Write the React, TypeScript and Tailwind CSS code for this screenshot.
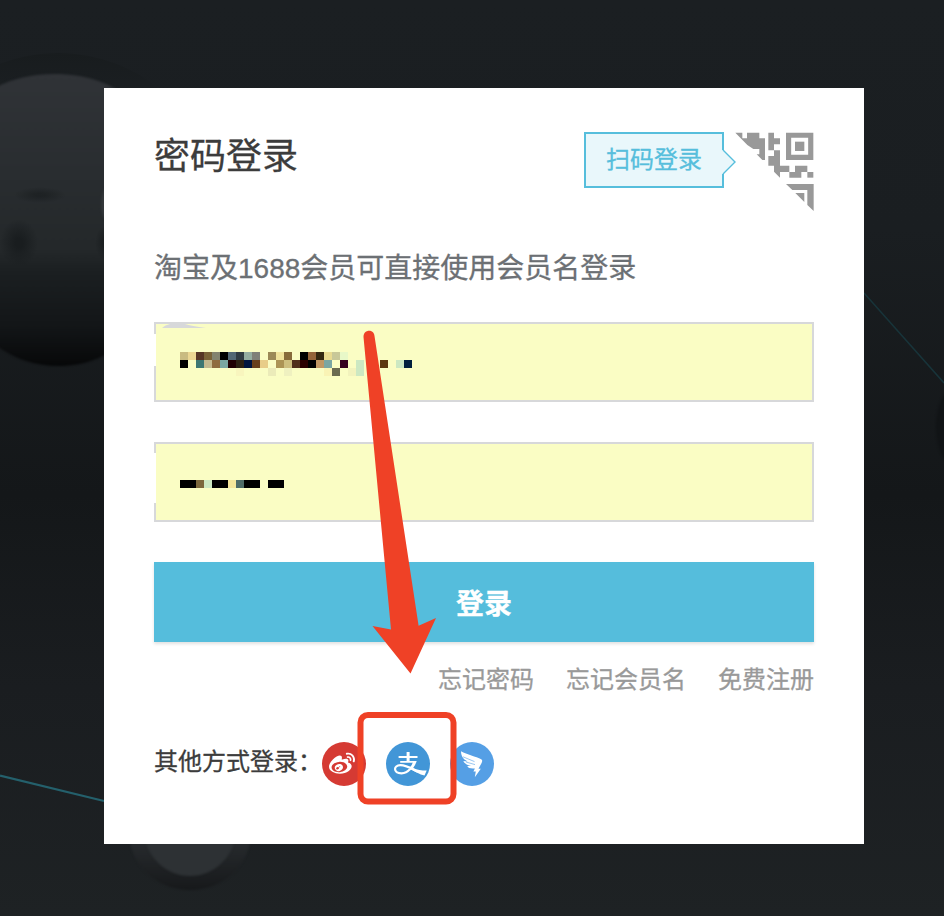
import React from "react";
import { FaWeibo } from "react-icons/fa";

const ACCOUNT_ROWS: string[][] = [
  ["#c9bb81", "#ecd793", "#563626", "#796338", "#83846f", "#000", "#526774", "#303b42", "#94ada0", "#7f8078", "", "#9b8957", "#f0e39b", "#876b3a", "", "#000", "#94643a", "#332811", "#e8db91", "#c8c898", "#e8f8c8"],
  ["#000", "", "#3d7773", "#c4b98f", "#8e6b40", "#7aa7a2", "#200003", "#2c2113", "#001540", "#67401d", "#e8cd89", "", "#ac9455", "#cdbf7e", "#51301c", "#2b0000", "#000", "#c09763", "#7aa6a2", "", "#35001f", "", "#cce8c2", "", "", "#5c3711", "", "#cce8c2", "#001f3d"],
  ["", "", "", "", "", "", "", "#f8f5be", "", "", "", "#ebebb9", "", "#eff1c0", "", "", "", "", "#f9f3b5", "#6a6b50", "", "#f2f3bd", "#cce8c2"],
];

const PASSWORD_ROWS: string[][] = [
  ["#000", "#000", "#7b673c", "#cce8c2", "#000", "#000", "#f5e79b", "#4e6b67", "#000", "#000", "", "#000", "#000"],
];

function Mosaic({ rows }: { rows: string[][] }) {
  return (
    <div className="flex flex-col">
      {rows.map((row, r) => (
        <div key={r} className="flex h-2">
          {row.map((color, c) => (
            <span key={c} className="h-2 w-2" style={{ backgroundColor: color || "transparent" }} />
          ))}
        </div>
      ))}
    </div>
  );
}

function Backdrop() {
  return (
    <svg className="absolute inset-0" width="944" height="916" viewBox="0 0 944 916" fill="none">
      <defs>
        <linearGradient id="base" x1="0" y1="0" x2="0" y2="1">
          <stop offset="0" stopColor="#1b1f22" />
          <stop offset="0.25" stopColor="#1a1e21" />
          <stop offset="0.54" stopColor="#141719" />
          <stop offset="0.75" stopColor="#1a1d20" />
          <stop offset="1" stopColor="#1e2224" />
        </linearGradient>
        <linearGradient id="head" x1="0" y1="74" x2="0" y2="366" gradientUnits="userSpaceOnUse">
          <stop offset="0" stopColor="#303337" />
          <stop offset="0.35" stopColor="#292d30" />
          <stop offset="0.6" stopColor="#24282a" />
          <stop offset="0.68" stopColor="#1b1f21" />
          <stop offset="0.86" stopColor="#131618" />
          <stop offset="1" stopColor="#070809" />
        </linearGradient>
        <linearGradient id="halo" x1="0" y1="52" x2="0" y2="200" gradientUnits="userSpaceOnUse">
          <stop offset="0" stopColor="#181c1e" />
          <stop offset="0.3" stopColor="#1b1f22" />
          <stop offset="1" stopColor="#191d1f" />
        </linearGradient>
        <linearGradient id="rim" x1="0" y1="830" x2="0" y2="890" gradientUnits="userSpaceOnUse">
          <stop offset="0" stopColor="#2b2f32" />
          <stop offset="1" stopColor="#17191b" />
        </linearGradient>
        <radialGradient id="eye">
          <stop offset="0.2" stopColor="#191d1f" />
          <stop offset="1" stopColor="#191d1f" stopOpacity="0" />
        </radialGradient>
        <filter id="edge" x="-10%" y="-10%" width="120%" height="120%" colorInterpolationFilters="sRGB">
          <feGaussianBlur stdDeviation="1.2" />
        </filter>
      </defs>
      <rect width="944" height="916" fill="url(#base)" />
      <ellipse cx="58" cy="190" rx="150" ry="137" fill="url(#halo)" />
      <path d="M-60 190C-60 105 0 74 54 74C118 74 170 112 170 200C170 310 125 366 58 366C0 366-60 320-60 190Z" fill="url(#head)" filter="url(#edge)" />
      <ellipse cx="40" cy="195" rx="26" ry="8" fill="url(#eye)" opacity="0.65" />
      <ellipse cx="19" cy="243" rx="19" ry="24" fill="url(#eye)" />
      <ellipse cx="107" cy="204" rx="6" ry="16" fill="#34383b" filter="url(#edge)" />
      <ellipse cx="107" cy="243" rx="12" ry="18" fill="url(#eye)" />
      <path d="M0 775.5L104 801" stroke="#24606c" strokeWidth="2.2" />
      <path d="M864 293L944 383" stroke="#18343a" strokeWidth="1.5" />
      <ellipse cx="190" cy="832" rx="61" ry="58" fill="url(#rim)" filter="url(#edge)" />
      <ellipse cx="190" cy="829" rx="46" ry="47" fill="#2d3134" filter="url(#edge)" />
      <ellipse cx="954" cy="427" rx="18" ry="38" fill="#111416" filter="url(#edge)" />
    </svg>
  );
}

function QrCorner() {
  return (
    <svg width="79" height="79" viewBox="15 21 237 237" fill="#999">
      <path d="M16 23H37V40H51V23H88V40H105V105H97L80 88H88V72H70L52 60Z" />
      <path d="M115 23H132V40H150V58H132V76H115Z" />
      <path d="M132 76H150V122H178V141H150V158L132 140V122H115V93H132Z" />
      <path d="M195 122H232V141H214V158H178V141H195Z" />
      <path d="M232 141H250V158H232Z" />
      <path fillRule="evenodd" d="M168 23H250V105H168ZM183.5 38.5V89.5H234.5V38.5Z" />
      <path d="M195 50H223V78H195Z" />
      <path d="M168 177H251V258L232 240V195H187Z" />
      <path d="M196 204H223V231Z" />
    </svg>
  );
}

function AlipayMark() {
  return (
    <svg width="44" height="44" viewBox="0 0 44 44" fill="none" stroke="#fff">
      <path d="M12.6 15H31.5M14.2 19.9H29.5" strokeWidth="1.8" />
      <path d="M22.1 10V19.8" strokeWidth="3" />
      <path d="M28.4 19.4C27.2 24 22.5 31.3 15.5 31.3C7.2 31.3 7 23.2 14.4 23.2C20.5 23.2 27 27.4 32 29.8" strokeWidth="2.2" />
      <path d="M27.4 19H30.7C30 21.5 28.5 24 27.2 25.9C31 27.7 35.5 28.4 40.7 28.6L38.5 33.6C33.5 32.3 29 29.8 24.4 27C26 24.5 27 22 27.4 19Z" fill="#fff" stroke="none" />
    </svg>
  );
}

function DingTalkMark() {
  return (
    <svg width="44" height="44" viewBox="0 0 44 44" fill="#fff">
      <path d="M11 9.2C17 12.7 26 14.4 31.2 17.2C32.7 18 32.3 19.5 31.6 21L28.5 26.8H30.8L24.8 35.2L25.8 29.6H23.4L24.9 26.4C20.5 26.8 18.5 26 17.2 24.3L21 23.6C17 23.2 14.5 21.6 13.3 18.9L17.5 19.4C13.5 17.2 11.1 14.6 11 9.2Z" />
      <path d="M13 14.8L24.5 19.6M16 20L25 22.6" stroke="#559fe5" strokeWidth="0.6" fill="none" />
    </svg>
  );
}

function Field({ rows, mark }: { rows: string[][]; mark?: boolean }) {
  return (
    <div className="relative flex h-20 items-center border-2 border-[#d7d8da] bg-[#fafdc4] pl-6">
      <div className={mark ? "mt-[4px]" : "mt-[4px]"}>
        <Mosaic rows={rows} />
      </div>
      <span className={mark ? "absolute -left-[2px] top-[10px] h-[32px] w-[2px] bg-white" : "absolute -left-[2px] top-[9px] h-[50px] w-[2px] bg-white"} />
      {mark && (
        <svg className="absolute left-[5px] top-0" width="46" height="4" viewBox="0 0 46 4">
          <path d="M1 4Q4 1.2 9 0H24Q30 1.8 45 4Z" fill="#d7d8da" />
        </svg>
      )}
    </div>
  );
}

export default function App() {
  return (
    <div className="relative h-[916px] w-[944px] overflow-hidden bg-[#1a1e21] font-['Liberation_Sans','Noto_Sans_CJK_SC',sans-serif]">
      <Backdrop />
      <main className="relative ml-[104px] mt-[88px] flex h-[756px] w-[760px] flex-col bg-white px-[50px] pt-[44px] [-webkit-text-stroke:0.3px]">
        <header className="flex h-[79px] items-start justify-between">
          <h1 className="text-[36px] leading-[50px] text-[#3c3c3c]">密码登录</h1>
          <div className="flex items-start">
            <div className="relative mr-[11px] flex h-14 w-[140px] items-center justify-center border-2 border-[#56bedc] bg-[#e9f7fb] text-[24px] leading-8 text-[#56bedc]">
              扫码登录
              <svg className="absolute -right-[14px] top-[15px]" width="14" height="26" viewBox="0 0 14 26">
                <path d="M0 1H1L13 13L1 25H0Z" fill="#e9f7fb" />
                <path d="M1 1L13 13L1 25" fill="none" stroke="#56bedc" strokeWidth="1.4" />
              </svg>
            </div>
            <QrCorner />
          </div>
        </header>
        <p className="mt-[38px] h-10 text-[28px] leading-10 text-[#6c7074]">淘宝及1688会员可直接使用会员名登录</p>
        <form className="mt-[33px] flex flex-col gap-10">
          <Field rows={ACCOUNT_ROWS} mark />
          <Field rows={PASSWORD_ROWS} />
          <button type="button" className="h-20 bg-[#55bddc] pt-[5px] text-[28px] font-bold leading-[75px] text-white shadow-[0_2px_3px_rgba(0,0,0,0.12)]">
            登录
          </button>
        </form>
        <nav className="mt-5 flex h-9 justify-end gap-8 whitespace-nowrap text-[24px] leading-9 text-[#999]">
          <span>忘记密码</span>
          <span>忘记会员名</span>
          <span>免费注册</span>
        </nav>
        <div className="mt-[44px] flex h-11 items-center">
          <span className="mb-1 w-[168px] whitespace-nowrap text-[24px] leading-9 text-[#3c3c3c]">其他方式登录：</span>
          <div className="flex gap-5">
            <span className="flex h-11 w-11 items-center justify-center rounded-full bg-[#d53a33] pr-[4px] text-white">
              <FaWeibo size={26} />
            </span>
            <span className="h-11 w-11 rounded-full bg-[#4296d7]">
              <AlipayMark />
            </span>
            <span className="h-11 w-11 rounded-full bg-[#559fe5]">
              <DingTalkMark />
            </span>
          </div>
        </div>
      </main>
      <svg className="pointer-events-none absolute inset-0" width="944" height="916" viewBox="0 0 944 916" fill="none">
        <path d="M363.5 337C363.5 329 374 329 374.5 336L418.6 625.8L436 618L410.5 673.5L372.5 626L391 629.5Z" fill="#ef4126" />
        <rect x="360.5" y="715" width="93" height="86.5" rx="7.5" stroke="#ef4126" strokeWidth="6" />
      </svg>
    </div>
  );
}
